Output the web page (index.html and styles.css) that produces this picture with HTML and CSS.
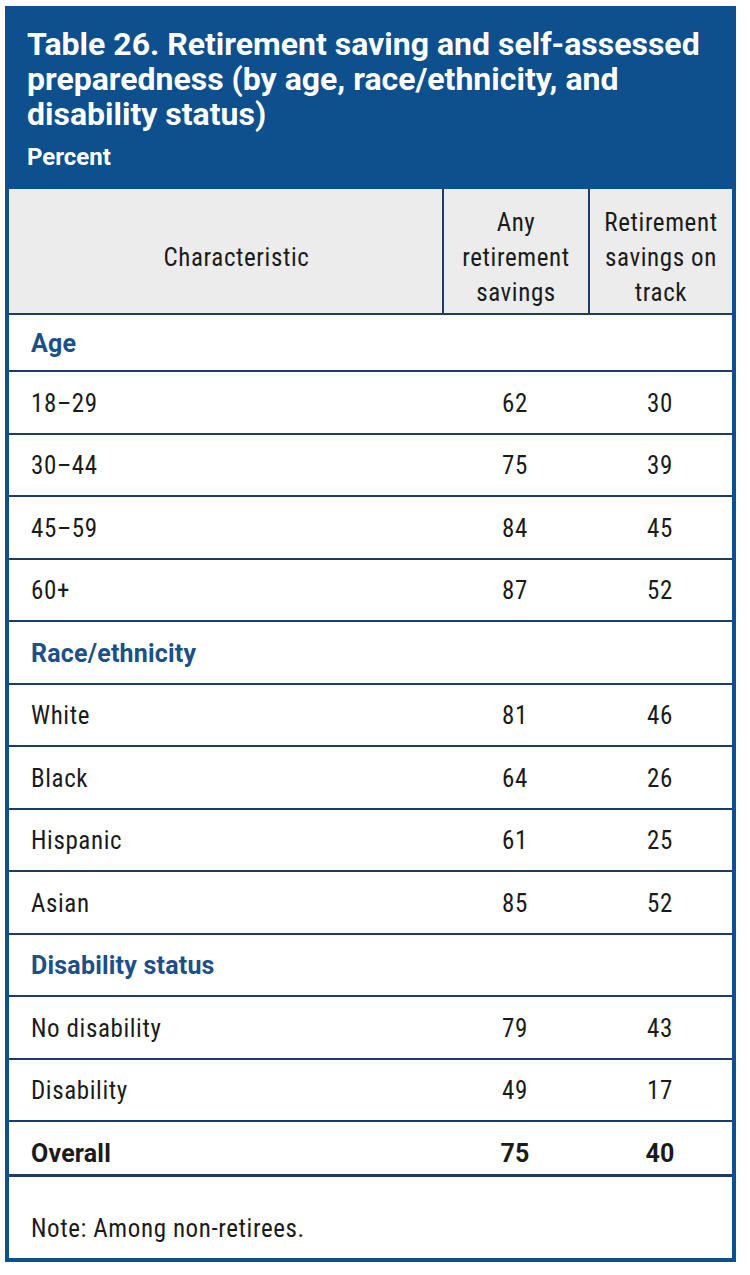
FILE: index.html
```html
<!DOCTYPE html>
<html lang="en">
<head>
<meta charset="utf-8">
<title>Table 26</title>
<link rel="stylesheet" href="styles.css">
</head>
<body>
<div class="card">
  <div class="caption">
    <h1 class="title">Table 26. Retirement saving and self-assessed<br>preparedness (by age, race/ethnicity, and<br>disability status)</h1>
    <div class="unit">Percent</div>
  </div>
  <div class="table">
    <div class="head">
      <div class="hcell hcell-char">Characteristic</div>
      <div class="hcell">Any<br>retirement<br>savings</div>
      <div class="hcell">Retirement<br>savings on<br>track</div>
    </div>
    <div class="row section short"><div class="label">Age</div></div>
    <div class="row"><div class="label">18–29</div><div class="num">62</div><div class="num">30</div></div>
    <div class="row"><div class="label">30–44</div><div class="num">75</div><div class="num">39</div></div>
    <div class="row"><div class="label">45–59</div><div class="num">84</div><div class="num">45</div></div>
    <div class="row"><div class="label">60+</div><div class="num">87</div><div class="num">52</div></div>
    <div class="row section"><div class="label">Race/ethnicity</div></div>
    <div class="row"><div class="label">White</div><div class="num">81</div><div class="num">46</div></div>
    <div class="row"><div class="label">Black</div><div class="num">64</div><div class="num">26</div></div>
    <div class="row"><div class="label">Hispanic</div><div class="num">61</div><div class="num">25</div></div>
    <div class="row"><div class="label">Asian</div><div class="num">85</div><div class="num">52</div></div>
    <div class="row section"><div class="label">Disability status</div></div>
    <div class="row"><div class="label">No disability</div><div class="num">79</div><div class="num">43</div></div>
    <div class="row"><div class="label">Disability</div><div class="num">49</div><div class="num">17</div></div>
    <div class="row total short"><div class="label">Overall</div><div class="num">75</div><div class="num">40</div></div>
    <div class="note">Note: Among non-retirees.</div>
  </div>
</div>
</body>
</html>
```
FILE: styles.css
```css
html, body {
  margin: 0;
  padding: 0;
  background: #ffffff;
}

body {
  font-family: "Roboto", "Liberation Sans", sans-serif;
  font-stretch: 85%;
  letter-spacing: 0.6px;
  color: #1b1b1b;
}

.card {
  width: 731px;
  box-sizing: border-box;
  margin: 6px 0 0 5px;
  background: #0e4f8d;
  padding: 0 4px 4px 4px;
}

.caption {
  height: 183px;
  box-sizing: border-box;
  padding: 21px 0 0 18px;
  color: #ffffff;
}

.title {
  margin: 0;
  font-size: 32px;
  line-height: 35px;
  font-weight: 700;
  font-stretch: 100%;
  letter-spacing: 0;
  white-space: nowrap;
}

.unit {
  margin-top: 12px;
  font-size: 24px;
  line-height: 26px;
  font-weight: 700;
  font-stretch: 100%;
  letter-spacing: 0;
}

.table {
  background: #ffffff;
}

.head {
  display: grid;
  grid-template-columns: 433px 146px 1fr;
  height: 124px;
  background: #ececec;
}

.hcell {
  display: flex;
  align-items: center;
  justify-content: center;
  padding-top: 12px;
  text-align: center;
  font-size: 25px;
  line-height: 35px;
  color: #1b1b1b;
}

.hcell + .hcell {
  border-left: 2px solid #1c3d6c;
}

.hcell-char {
  padding-left: 22px;
}

.row {
  display: grid;
  grid-template-columns: 433px 146px 1fr;
  align-items: center;
  height: 62.5px;
  box-sizing: border-box;
  padding-top: 2px;
  border-top: 2px solid #1c3d6c;
  font-size: 25px;
}

.row.short {
  height: 57px;
}

.label {
  padding-left: 22px;
}

.num {
  text-align: center;
}

.section .label {
  font-weight: 700;
  font-stretch: 97%;
  letter-spacing: 0.2px;
  color: #1d4f88;
}

.total {
  padding-top: 10px;
  font-weight: 700;
  font-stretch: 97%;
  letter-spacing: 0.2px;
  border-bottom: 3px solid #1c3d6c;
}

.note {
  height: 81px;
  box-sizing: border-box;
  padding: 37px 0 0 22px;
  font-size: 25px;
  line-height: 30px;
}
```
